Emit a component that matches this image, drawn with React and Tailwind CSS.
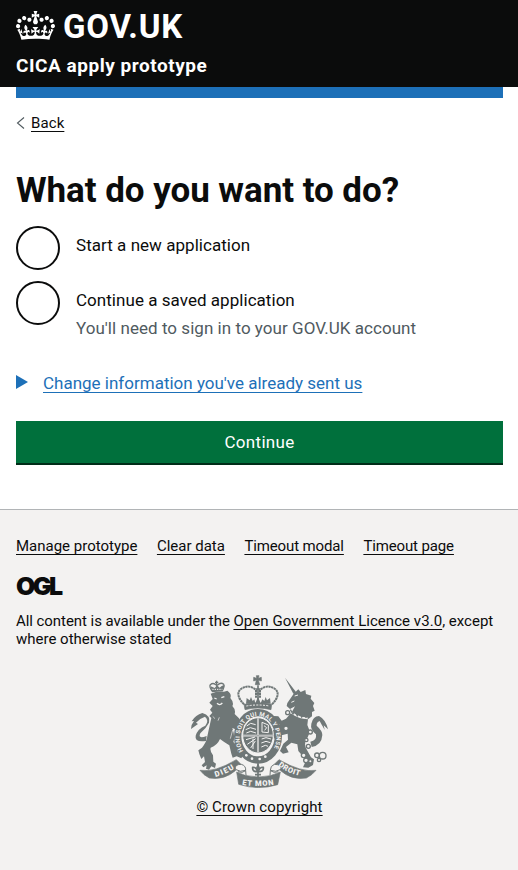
const crown =
  "M25 30.2c3.5 1.5 7.7-.2 9.1-3.7 1.5-3.6-.2-7.8-3.9-9.2-3.6-1.4-7.6.3-9.1 3.9-1.4 3.5.3 7.5 3.9 9zM9 39.5c3.6 1.5 7.8-.2 9.2-3.7 1.5-3.6-.2-7.8-3.9-9.1-3.6-1.5-7.6.2-9.1 3.8-1.4 3.5.3 7.5 3.8 9zM4.4 57.2c3.5 1.5 7.7-.2 9.1-3.8 1.5-3.6-.2-7.7-3.9-9.1-3.5-1.5-7.6.3-9.1 3.8-1.4 3.5.3 7.6 3.9 9.1zm38.3-21.4c3.5 1.5 7.7-.2 9.1-3.8 1.5-3.6-.2-7.7-3.9-9.1-3.6-1.5-7.6.3-9.1 3.8-1.3 3.6.4 7.7 3.9 9.1zm64.4-5.6c-3.6 1.5-7.8-.2-9.1-3.7-1.5-3.6.2-7.8 3.8-9.2 3.6-1.4 7.7.3 9.2 3.9 1.3 3.5-.4 7.5-3.9 9zm15.9 9.3c-3.6 1.5-7.7-.2-9.1-3.7-1.5-3.6.2-7.8 3.7-9.1 3.6-1.5 7.7.2 9.2 3.8 1.5 3.5-.3 7.5-3.8 9zm4.7 17.7c-3.6 1.5-7.8-.2-9.2-3.8-1.5-3.6.2-7.7 3.9-9.1 3.6-1.5 7.7.3 9.2 3.8 1.3 3.5-.4 7.6-3.9 9.1zM89.3 35.8c-3.6 1.5-7.8-.2-9.2-3.8-1.4-3.6.2-7.7 3.9-9.1 3.6-1.5 7.7.3 9.2 3.8 1.4 3.6-.3 7.7-3.9 9.1zM69.7 17.7l8.9 4.7V9.3l-8.9 2.8c-.2-.3-.5-.6-.9-.9L72.4 0H59.6l3.5 11.2c-.3.3-.6.5-.9.9l-8.8-2.8v13.1l8.8-4.7c.3.3.6.7.9.9l-5 15.4v.1c-.2.8-.4 1.6-.4 2.4 0 4.1 3.1 7.5 7 8.1h.2c.3 0 .7.1 1 .1.4 0 .7 0 1-.1h.2c4-.6 7.1-4.1 7.1-8.1 0-.8-.1-1.7-.4-2.4V34l-5.1-15.4c.4-.2.7-.6 1-.9zM66 92.8c16.9 0 32.8 1.1 47.1 3.2 4-16.9 8.9-26.7 14-33.5l-9.6-3.4c1 4.9 1.1 7.2 0 10.2-1.5-1.4-3-4.3-4.2-8.7L108.6 76c2.8-2 5-3.2 7.5-3.3-4.4 9.4-10 11.9-13.6 11.2-4.3-.8-6.3-4.6-5.6-7.9 1-4.7 5.7-5.9 8-.5 4.3-8.7-3-11.4-7.6-8.8 7.1-7.2 7.9-13.5 2.1-21.1-8 6.1-8.1 12.3-4.5 20.8-4.7-5.4-12.1-2.5-9.5 6.2 3.4-5.2 7.9-2 7.2 3.1-.6 4.3-6.4 7.8-13.5 7.2-10.3-.9-10.9-8-11.2-13.8 2.5-.5 7.1 1.8 11 7.3L80.2 60c-4.1 4.4-8 5.3-12.3 5.4 1.4-4.4 8-11.6 8-11.6H55.5s6.4 7.2 7.9 11.6c-4.2-.1-8-1-12.3-5.4l1.4 16.4c3.9-5.5 8.5-7.7 10.9-7.3-.3 5.8-.9 12.8-11.1 13.8-7.2.6-12.9-2.9-13.5-7.2-.7-5 3.8-8.3 7.1-3.1 2.7-8.7-4.6-11.6-9.4-6.2 3.7-8.5 3.6-14.7-4.6-20.8-5.8 7.6-5 13.9 2.2 21.1-4.7-2.6-11.9.1-7.7 8.8 2.3-5.5 7.1-4.2 8.1.5.7 3.3-1.3 7.1-5.7 7.9-3.5.7-9-1.8-13.5-11.2 2.5.1 4.7 1.3 7.5 3.3l-4.7-15.4c-1.2 4.4-2.7 7.2-4.3 8.7-1.1-3-.9-5.3 0-10.2l-9.5 3.4c5 6.9 9.9 16.7 14 33.5 14.8-2.1 30.8-3.2 47.7-3.2z";

const link = "underline decoration-1 underline-offset-[3px]";

function Radio({ label, hint }) {
  return (
    <label className="flex items-start gap-4">
      <span className="h-11 w-11 shrink-0 rounded-full border-2 border-[#0b0c0c] bg-white" />
      <span className="flex flex-col pt-[9px] text-[17px] leading-5 tracking-[0.04px]">
        <span>{label}</span>
        {hint && <span className="mt-2 text-[#505a5f]">{hint}</span>}
      </span>
    </label>
  );
}

function Arms() {
  return (
    <svg className="mr-px h-[113px] w-[138px]" viewBox="30 28 414 339" fill="none" stroke="#6f7777">
      <defs>
        <path id="garter" d="M192 258A55 65 0 1 1 276 258" />
        <path id="left" d="M107 334Q139 326 176 300" />
        <path id="base" d="M186 357Q234 366 286 356" />
        <path id="right" d="M294 300Q325 324 368 333" />
      </defs>
      {/* Lion */}
      <g fill="#6f7777" stroke="none">
        <path d="M92 62l4 18 33-3 4-19-8 3-6 5-8-7-7 8z" />
        <path d="M92 84Q110 76 132 78L142 75Q156 84 151 97Q163 111 157 121Q168 132 164 145L177 158Q183 176 191 185L185 199Q169 192 157 187Q166 213 160 229Q172 238 173 257L190 268L184 278L170 272L158 276L154 264L148 239Q133 230 120 220Q112 239 92 246Q89 256 99 269L100 288L108 294L105 307L94 302L87 312L78 309L80 299L70 305L65 299L75 289L72 272L64 280Q57 266 55 254L66 246Q80 229 82 212L88 184L94 157L88 151L97 141L90 132L98 121L88 111L98 100Z" />
        <path d="M78 226Q43 231 47 210Q53 189 76 180Q88 164 75 153Q59 158 48 171L54 175L33 190Q34 175 42 166L35 167Q47 147 67 142Q93 150 87 171Q79 187 61 203Q52 221 80 211Z" />
      </g>
      <path d="M96 76q-9-13-5-19 9-8 19 2M127 74q8-13 4-18-9-8-19 3M110 45v30M105 50h10" strokeWidth="4" />
      <path d="M97 71h30" stroke="#f3f2f1" strokeWidth="3" strokeDasharray="4 3" />
      <path d="M103 97l7 3M124 96l9-3M111 113q8 8 16-1" stroke="#f3f2f1" strokeWidth="4" />
      <path d="M98 152l7 7M118 155l-4 10M158 193l-7 26" stroke="#f3f2f1" strokeWidth="2" />

      {/* Unicorn */}
      <g fill="#6f7777" stroke="none">
        <path d="M315 36l33 43-8 5zM341 84l14-13 7 8 14-6 2 12 16 5-2 9 11 13-4 9 5 14-8 4 0 13-12 9-50-19 11-20-15 8-10-9 2-9 14-20z" />
        <path d="M333 142l51 19-2 17 8 20-9 21q-10 15-3 29l15 27 9 6-3 17-14 8-16-1 8-18-4-10-18-21-3-20-18-5-16 13 8 16-17 4-9-8 10-22 14-12-1-18-18 5-12-7-7 9 15 20-12-4-18-29 13-7 4-11 11-2-6-8-14-1-5-8 9-10 12 1 10 13 13-6z" />
        <path d="M391 228q20-2 17-22-18-15-14-32 5-23 23-23 20 10 27 40l-13-12 3 14q-11-20-15-27-10 3-9 14 17 15 17 28-2 31-32 36z" />
      </g>
      <path d="M331 139q27 19 52 19" stroke="#f3f2f1" strokeWidth="5" />
      <path d="M331 132l8 13 5-9 8 14 6-9 7 13 7-9 7 12" strokeWidth="4" />
      <path d="M344 91l10-3M334 110l9-4" stroke="#f3f2f1" strokeWidth="3" />
      <g strokeWidth="4" fill="#f3f2f1">
        <circle cx="323" cy="141" r="6" /><circle cx="318" cy="188" r="7" /><circle cx="391" cy="199" r="6" />
        <circle cx="379" cy="223" r="5" /><circle cx="385" cy="242" r="6" /><circle cx="371" cy="269" r="7" />
        <circle cx="378" cy="284" r="7" /><circle cx="411" cy="269" r="7" /><circle cx="428" cy="270" r="10" />
        <circle cx="391" cy="287" r="5" /><circle cx="417" cy="283" r="5" />
      </g>

      {/* Crown */}
      <g strokeWidth="5">
        <path d="M229 30h8l-2 8 9-3v11l-9-3 4 14h-13l3-14-8 3V35l9 3z" fill="#6f7777" strokeWidth="2" />
        <path d="M192 116q-26-27-12-44 25-19 48 1v25M276 116q26-27 12-44-25-19-48 1v25" strokeWidth="6" strokeDasharray="7 1.5" />
        <path d="M234 59v50M227 70h14M227 84h14" />
        <path d="M192 116q42-9 83 0l-2 16q-40-10-78 0z" fill="#6f7777" strokeWidth="2" />
      </g>
      <path d="M198 114l2-17 9 7 4-10 5 12 5-5 3 12 8-20 8 20 5-12 6 5 4-12 4 10 9-7 2 17z" fill="#6f7777" stroke="none" />
      <path d="M199 121q35-6 69 0" stroke="#f3f2f1" strokeWidth="3" strokeDasharray="6 4" />

      {/* Garter and shield */}
      <ellipse cx="234" cy="212" rx="61" ry="71" strokeWidth="22" />
      <text fill="#f3f2f1" stroke="none" className="font-[Roboto,sans-serif] text-[18px] font-bold">
        <textPath href="#garter" startOffset="3" textLength="262">HONI SOIT QUI MAL Y PENSE</textPath>
      </text>
      <ellipse cx="234" cy="209" rx="46" ry="53" fill="#6f7777" stroke="#f3f2f1" strokeWidth="3" />
      <path d="M234 158v102M189 210h90" stroke="#f3f2f1" strokeWidth="5" />
      <path d="M234 158v102M189 210h90" strokeWidth="1.5" />
      <path d="M200 181l12-8 15 4M197 192l14-6 17 5M199 202l13-5 16 5M246 170l19 8v23l-19-2zM252 180l8 6-6 8M198 222l27-8M202 236l25-17M212 247l14-21M245 220l13-4 15 4M244 232l14-5 13 4M244 244l12-5 8 3M219 219v31" stroke="#f3f2f1" strokeWidth="3" />
      <path d="M190 263l26 12 18 5 20-5 22-13" strokeWidth="9" />
      <g fill="#f3f2f1" stroke="none">
        <circle cx="199" cy="269" r="4" /><circle cx="216" cy="279" r="4" /><circle cx="239" cy="280" r="4" /><circle cx="256" cy="273" r="4" />
      </g>
      {/* Motto ribbon */}
      <path d="M60 314q45 7 109-32l15 15q-15 5-18 18-34 29-78 22-18-9-28-23zM408 314q-45 7-111-32l-15 15q15 5 20 18 33 29 77 22 18-9 29-23z" fill="#6f7777" strokeWidth="2" />
      <path d="M184 296q-21 0-18 15 15 10 31 3 1-14-13-18zM283 296q21 0 20 15-16 10-32 3 0-14 12-18z" fill="#f3f2f1" strokeWidth="3" />
      <path d="M170 319l6 37q58 19 117 1l8-38q-65 30-131 0z" fill="#6f7777" strokeWidth="2" />
      <path d="M174 318q12 6 23-3l1 14M295 318q-12 6-24-3l-1 14" fill="#f3f2f1" strokeWidth="3" />
      <path d="M234 293v41M234 318q-18 1-16-13 10-2 16 13 6-15 16-13 2 14-16 13M225 327h18" strokeWidth="5" />
      <path d="M234 297l-4 10 4 8 4-8z" fill="#6f7777" strokeWidth="4" />
      <g fill="#f3f2f1" stroke="none" className="font-[Roboto,sans-serif] text-[23px] font-black">
        <text><textPath href="#left" textLength="62">DIEU</textPath></text>
        <text><textPath href="#base" textLength="96">ET MON</textPath></text>
        <text><textPath href="#right" textLength="72">DROIT</textPath></text>
      </g>
    </svg>
  );
}

export default function App() {
  return (
    <div className="flex h-[870px] w-full flex-col overflow-hidden bg-white font-[Roboto,sans-serif] text-[#0b0c0c]">
      <header className="h-[87px] shrink-0 bg-[#0b0c0c] pl-4 text-white">
        <div className="flex h-[54px] items-start pt-[11px]">
          <svg className="h-[29px] w-[39px]" viewBox="0 0 132 97" preserveAspectRatio="none" fill="white">
            <path d={crown} />
          </svg>
          <span className="ml-2 text-[33px] leading-[31px] font-bold tracking-[0.8px]">GOV.UK</span>
        </div>
        <div className="text-[19px] leading-[23px] font-bold tracking-[0.53px]">CICA apply prototype</div>
      </header>
      <div className="mr-[15px] ml-4 h-[11px] shrink-0 bg-[#1d70b8]" />
      <main className="flex h-[411px] shrink-0 flex-col pr-[15px] pl-4">
        <a className="mt-[15px] flex h-5 items-center text-[15px]">
          <svg className="mr-1.5 h-3 w-[9px]" viewBox="0 0 9 12" fill="none" stroke="#505a5f" strokeWidth="1.1">
            <path d="M8 .5L1.5 6 8 11.5" />
          </svg>
          <span className={`${link} tracking-[0.1px]`}>Back</span>
        </a>
        <h1 className="mt-[37px] h-[42px] text-[35px] leading-[42px] font-bold tracking-[-0.06px] whitespace-nowrap">What do you want to do?</h1>
        <div className="mt-[14px] flex h-[116px] flex-col gap-[11px]">
          <Radio label="Start a new application" />
          <Radio label="Continue a saved application" hint="You'll need to sign in to your GOV.UK account" />
        </div>
        <div className="mt-[31px] flex h-5 items-center text-[17px] text-[#1d70b8]">
          <svg className="mr-[15px] mb-0.5 h-[14px] w-3" viewBox="0 0 12 14" fill="#1d70b8"><path d="M0 0l12 7-12 7z" /></svg>
          <span className={`${link} mt-0.5`}>Change information you've already sent us</span>
        </div>
        <button className="mt-7 h-[42px] shrink-0 bg-[#00703c] pt-0.5 text-[17px] tracking-[0.3px] text-white shadow-[0_2px_0_#002d18]">Continue</button>
      </main>
      <footer className="flex grow flex-col border-t border-[#b1b4b6] bg-[#f3f2f1] pr-[15px] pl-4 text-[15px]">
        <nav className="mt-[27px] flex h-[18px] items-center gap-[19.5px] whitespace-nowrap">
          <a className={link}>Manage prototype</a>
          <a className={link}>Clear data</a>
          <a className={`${link} tracking-[-0.13px]`}>Timeout modal</a>
          <a className={`${link} tracking-[-0.13px]`}>Timeout page</a>
        </nav>
        <div className="mt-[21px] h-5 font-[Inter,sans-serif] text-[25px] leading-5 font-black tracking-[-2.6px]">OGL</div>
        <p className="mt-4 text-[15px] leading-[18px] whitespace-nowrap">
          <span className="tracking-[-0.06px]">All content is available under the </span><a className={`${link} tracking-[0.05px]`}>Open Government Licence v3.0</a>, except<br />where otherwise stated
        </p>
        <div className="mt-[27px] flex flex-col items-center">
          <Arms />
          <a className={`${link} mt-[9px] leading-5 tracking-[0.12px]`}>© Crown copyright</a>
        </div>
      </footer>
    </div>
  );
}
